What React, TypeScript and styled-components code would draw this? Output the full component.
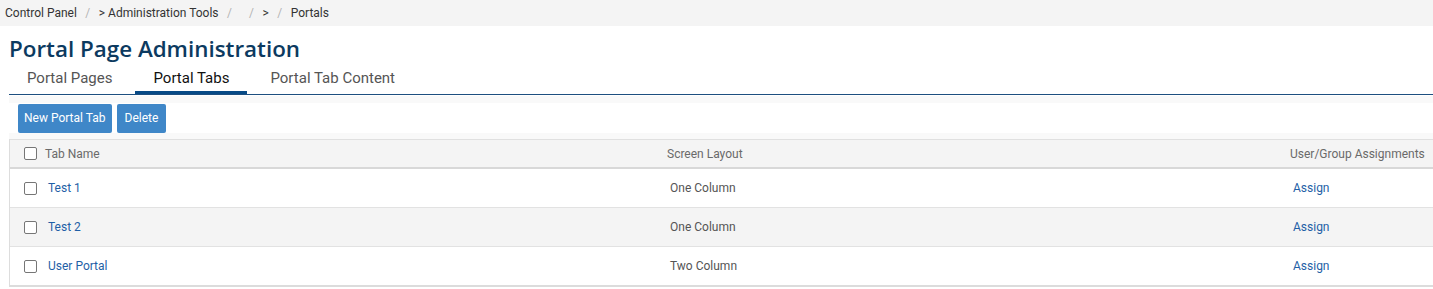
import React from "react";
import styled, { createGlobalStyle } from "styled-components";

const Global = createGlobalStyle`
  html, body { margin: 0; padding: 0; background: #ffffff; }
  body { font-family: Roboto, "Liberation Sans", Arial, sans-serif; }
  * { box-sizing: border-box; }
`;

const Page = styled.div`
  width: 1433px;
  height: 289px;
  overflow: hidden;
  display: flex;
  flex-direction: column;
`;

const Breadcrumbs = styled.nav`
  height: 26px;
  background: #f4f4f4;
  display: flex;
  align-items: center;
  padding-left: 5px;
  font-size: 12px;
  color: #333333;
`;

const Crumb = styled.span`
  color: #333333;
`;

const Sep = styled.span`
  color: #b5b5b5;
  margin: 0 8.5px;
`;

const Content = styled.div`
  padding-left: 9px;
  display: flex;
  flex-direction: column;
`;

const Title = styled.h1`
  margin: 9px 0 0 0;
  font-family: "Open Sans", "Noto Sans", sans-serif;
  font-weight: 600;
  font-size: 22.4px;
  line-height: 27px;
  color: #0c3a60;
`;

const TabBar = styled.div`
  display: flex;
  gap: 5px;
  border-bottom: 1px solid #1d4f80;
  height: 30px;
  margin-top: 3px;
`;

const Tab = styled.div<{ $active?: boolean }>`
  padding: 0 18px;
  font-size: 15px;
  line-height: 22px;
  padding-top: 2px;
  color: ${(p) => (p.$active ? "#111111" : "#555555")};
  border-bottom: 3px solid ${(p) => (p.$active ? "#074a86" : "transparent")};
  height: 29px;
`;

const ToolbarWrap = styled.div`
  margin-top: 1px;
  background: #f9f9f9;
  padding: 7px 0 6px 0;
`;

const Toolbar = styled.div`
  background: #ffffff;
  display: flex;
  gap: 5px;
  padding-left: 9px;
  height: 30px;
  align-items: center;
`;

const Button = styled.button<{ $pad?: number }>`
  height: 29px;
  padding: 0 ${(p) => p.$pad ?? 6}px;
  border: none;
  border-radius: 2px;
  background: #3f87c8;
  color: #ffffff;
  font-family: Roboto, "Liberation Sans", Arial, sans-serif;
  font-size: 12px;
`;

const Table = styled.div`
  border-left: 1px solid #dddddd;
  display: flex;
  flex-direction: column;
`;

const cols = "650px 623px 1fr";

const HeaderRow = styled.div`
  display: grid;
  grid-template-columns: ${cols};
  height: 30px;
  background: #f4f4f4;
  border-top: 1px solid #e0e0e0;
  border-bottom: 2px solid #d8d8d8;
  align-items: center;
  font-size: 12px;
  color: #6a6a6a;
`;

const Row = styled.div<{ $alt?: boolean }>`
  display: grid;
  grid-template-columns: ${cols};
  height: 39px;
  background: ${(p) => (p.$alt ? "#f4f4f4" : "#ffffff")};
  border-bottom: 1px solid #e2e2e2;
  align-items: center;
  font-size: 12px;
  color: #555555;
  &:last-child {
    border-bottom: 2px solid #dcdcdc;
    height: 40px;
  }
`;

const Cell = styled.div<{ $pad?: number }>`
  display: flex;
  align-items: center;
  padding-left: ${(p) => p.$pad ?? 8}px;
  white-space: nowrap;
`;

const Check = styled.span<{ $gap: number }>`
  width: 13px;
  height: 13px;
  border: 1px solid #767676;
  border-radius: 2px;
  background: #ffffff;
  margin-right: ${(p) => p.$gap}px;
  flex: none;
`;

const Link = styled.a`
  color: #1f5fa6;
  text-decoration: none;
`;

const rows = [
  { name: "Test 1", layout: "One Column" },
  { name: "Test 2", layout: "One Column" },
  { name: "User Portal", layout: "Two Column" },
];

export default function App() {
  return (
    <Page>
      <Global />
      <Breadcrumbs>
        <Crumb>Control Panel</Crumb>
        <Sep>/</Sep>
        <Crumb>&gt; Administration Tools</Crumb>
        <Sep>/</Sep>
        <Crumb></Crumb>
        <Sep>/</Sep>
        <Crumb>&gt;</Crumb>
        <Sep>/</Sep>
        <Crumb>Portals</Crumb>
      </Breadcrumbs>
      <Content>
        <Title>Portal Page Administration</Title>
        <TabBar>
          <Tab>Portal Pages</Tab>
          <Tab $active>Portal Tabs</Tab>
          <Tab>Portal Tab Content</Tab>
        </TabBar>
        <ToolbarWrap>
          <Toolbar>
            <Button>New Portal Tab</Button>
            <Button $pad={8}>Delete</Button>
          </Toolbar>
        </ToolbarWrap>
        <Table>
          <HeaderRow>
            <Cell $pad={14}>
              <Check $gap={8} />
              Tab Name
            </Cell>
            <Cell $pad={7}>Screen Layout</Cell>
            <Cell $pad={7}>User/Group Assignments</Cell>
          </HeaderRow>
          {rows.map((r, i) => (
            <Row key={r.name} $alt={i === 1}>
              <Cell $pad={14}>
                <Check $gap={11} />
                <Link href="#">{r.name}</Link>
              </Cell>
              <Cell $pad={10}>{r.layout}</Cell>
              <Cell $pad={10}>
                <Link href="#">Assign</Link>
              </Cell>
            </Row>
          ))}
        </Table>
      </Content>
    </Page>
  );
}
